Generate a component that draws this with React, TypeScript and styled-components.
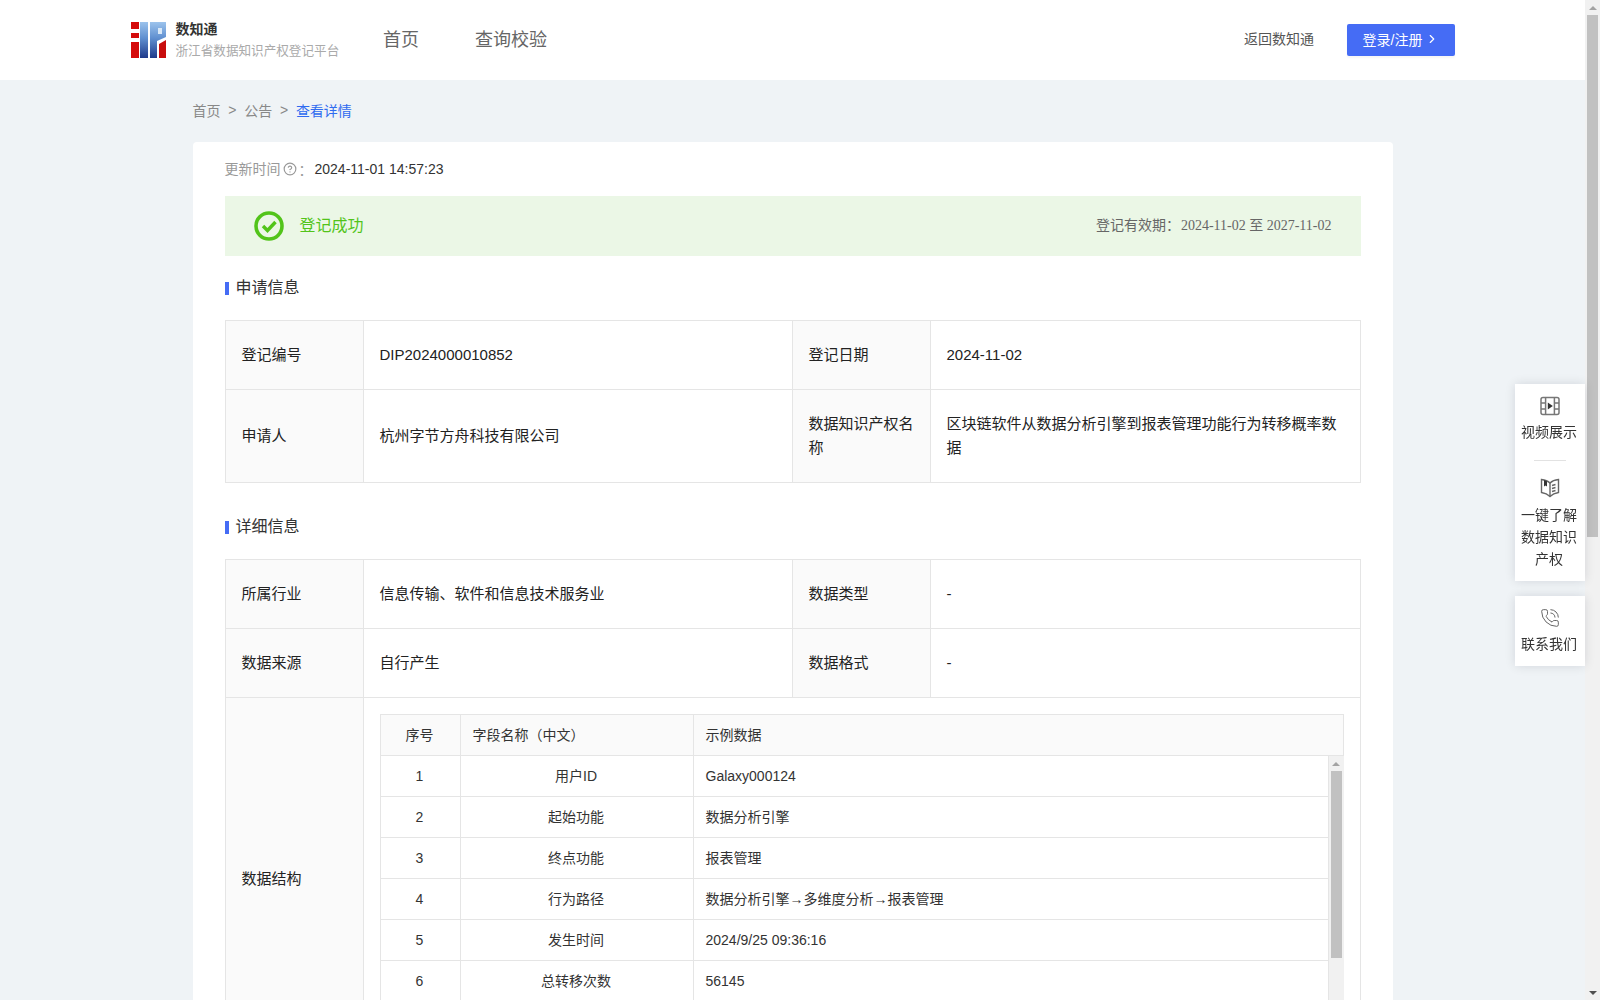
import React from "react";
import styled, {createGlobalStyle} from "styled-components";
import {ChevronRight, CircleHelp, PhoneCall} from "lucide-react";

//=============== STYLED ==================
const GlobalStyle = createGlobalStyle`
  html, body {
    margin: 0;
    height: 100%;
    overflow: hidden;
  }
  body {
    font-family: "Liberation Sans", "Noto Sans CJK SC", sans-serif;
    font-size: 14px;
    color: #333;
  }
`;

const Frame = styled.div`
  display: flex;
  height: 100vh;
  overflow: hidden;
`;
const Main = styled.div`
  flex: 1;
  min-width: 0;
  overflow: hidden;
  background-color: #eff3f6;
`;

const Header = styled.header`
  height: 80px;
  display: flex;
  align-items: center;
  padding: 0 130px 0 131px;
  background-color: #fff;
`;
const Brand = styled.div`
  width: 252px;
  display: flex;
  align-items: center;
  gap: 9.5px;
`;
const BrandName = styled.div`
  font-size: 14px;
  font-weight: bold;
  line-height: 20px;
  color: #333;
`;
const BrandSub = styled.div`
  font-size: 12.6px;
  line-height: 20px;
  padding-top: 2px;
  color: #aaa;
`;
const Nav = styled.nav`
  display: flex;
  gap: 56px;
  padding-bottom: 4px;
  font-size: 18px;
  color: #666;
`;
const HeaderRight = styled.div`
  margin-left: auto;
  display: flex;
  align-items: center;
  gap: 33px;
  color: #555;
`;
const BackLink = styled.span`
  padding-bottom: 4px;
`;
const LoginButton = styled.button`
  width: 108px;
  height: 32px;
  display: flex;
  align-items: center;
  justify-content: center;
  gap: 3px;
  padding: 0 0 3px;
  border: 0;
  border-radius: 2px;
  background-color: #456cf5;
  box-shadow: 0 2px 2px rgba(0, 0, 0, 0.04);
  color: #fff;
  font: inherit;
`;

const Content = styled.div`
  width: 1200px;
  margin: 0 auto;
`;
const Breadcrumb = styled.div`
  height: 62px;
  display: flex;
  align-items: center;
  padding-bottom: 3px;
  box-sizing: border-box;
  color: #888;
`;
const Crumb = styled.span<{ $active?: boolean }>`
  color: ${p => (p.$active ? "#2f6bf0" : "#888")};
`;
const CrumbSep = styled.span`
  margin: 0 7.75px;
`;
const Card = styled.div`
  padding: 0 32px;
  background-color: #fff;
  border-radius: 4px 4px 0 0;
`;
const UpdateRow = styled.div`
  height: 54px;
  display: flex;
  align-items: center;
  color: #999;
`;
const UpdateLabel = styled.span`
  padding-bottom: 2px;
`;
const HelpMark = styled.span`
  display: flex;
  margin-left: 2px;
`;
const Colon = styled.span`
  margin: 0 2px;
`;
const UpdateValue = styled.span`
  color: #333;
`;

const StatusBar = styled.div`
  height: 60px;
  display: flex;
  align-items: center;
  padding: 0 29px;
  background-color: #ebf7e6;
`;
const StatusText = styled.span`
  margin-left: 16px;
  padding-bottom: 4px;
  font-size: 16px;
  color: #52c41a;
`;
const Validity = styled.span`
  margin-left: auto;
  padding-bottom: 4px;
  color: #666;
`;
const ValidityDates = styled.span`
  margin-left: 1px;
  font-family: "Liberation Serif", "Noto Sans CJK SC", serif;
`;

const SectionTitle = styled.div<{ $spaced?: boolean }>`
  height: 64px;
  margin-top: ${p => (p.$spaced ? "12px" : "0")};
  display: flex;
  align-items: center;
  gap: 7px;
  font-size: 16px;
  color: #333;
  &::before {
    content: "";
    width: 4px;
    height: 13px;
    background-color: #456cf5;
  }
`;
const SectionText = styled.span`
  padding-bottom: 4px;
`;

const InfoGrid = styled.div`
  display: grid;
  grid-template-columns: 138px 429px 138px 1fr;
  border-top: 1px solid #e5e5e5;
  border-left: 1px solid #e5e5e5;
  font-size: 15px;
  line-height: 24px;
  color: #222;
`;
const Label = styled.div<{ $height?: number }>`
  min-height: ${p => p.$height || 69}px;
  display: flex;
  align-items: center;
  padding: 0 14px 0 16px;
  box-sizing: border-box;
  background-color: #fafafa;
  border-right: 1px solid #e5e5e5;
  border-bottom: 1px solid #e5e5e5;
`;
const Value = styled.div<{ $wide?: boolean }>`
  display: flex;
  align-items: center;
  padding: ${p => (p.$wide ? "16px" : "0 14px 0 16px")};
  box-sizing: border-box;
  min-width: 0;
  border-right: 1px solid #e5e5e5;
  border-bottom: 1px solid #e5e5e5;
  grid-column: ${p => (p.$wide ? "span 3" : "auto")};
`;

const FieldTable = styled.div`
  width: 100%;
  border: 1px solid #e5e5e5;
  border-bottom: 0;
  box-sizing: border-box;
  font-size: 14px;
  line-height: 20px;
  color: #333;
`;
const FieldRow = styled.div<{ $head?: boolean }>`
  height: 41px;
  display: grid;
  grid-template-columns: 80px 233px 1fr;
  box-sizing: border-box;
  border-bottom: 1px solid #e5e5e5;
  background-color: ${p => (p.$head ? "#fafafa" : "#fff")};
`;
const FieldCell = styled.div<{ $center?: boolean; $last?: boolean }>`
  display: flex;
  align-items: center;
  justify-content: ${p => (p.$center ? "center" : "flex-start")};
  padding: ${p => (p.$center ? "0 12px 0 11px" : "0 11px 0 12px")};
  border-right: ${p => (p.$last ? "0" : "1px solid #e5e5e5")};
`;
const FieldBody = styled.div`
  height: 287px;
  display: flex;
  margin-right: -1px;
  overflow: hidden;
`;
const FieldRows = styled.div`
  flex: 1;
  min-width: 0;
  border-right: 1px solid #e5e5e5;
`;

const Track = styled.div`
  width: 15px;
  flex: none;
  display: flex;
  flex-direction: column;
  align-items: center;
  background-color: #f1f1f1;
`;
const ArrowBox = styled.div<{ $down?: boolean }>`
  height: 15px;
  flex: none;
  display: flex;
  align-items: center;
  margin-top: ${p => (p.$down ? "auto" : "0")};
  &::before {
    content: "";
    border-left: 4px solid transparent;
    border-right: 4px solid transparent;
    ${p => (p.$down ? "border-top: 4px solid #505050;" : "border-bottom: 4px solid #a3a3a3;")}
  }
`;
const Thumb = styled.div<{ $height: number }>`
  width: 11px;
  height: ${p => p.$height}px;
  flex: none;
  background-color: #c1c1c1;
`;

const FloatBar = styled.aside`
  position: fixed;
  top: 384px;
  right: 15px;
  width: 70px;
  display: flex;
  flex-direction: column;
  gap: 15px;
`;
const FloatPanel = styled.div`
  background-color: #fff;
  box-shadow: 0 0 10px rgba(0, 0, 40, 0.12);
`;
const FloatItem = styled.div<{ $gap?: number }>`
  display: flex;
  flex-direction: column;
  align-items: center;
  padding: 12px 7px 11px;
  gap: ${p => p.$gap || 5}px;
  text-align: center;
  line-height: 22px;
  color: #333;
`;
const FloatText = styled.span`
  margin: 0 1px 0 -1px;
`;
const FloatDivider = styled.div`
  width: 32px;
  height: 1px;
  margin: 6px auto 5px;
  background-color: #e2e2e2;
`;

//============== DATA =====================
const fields = [
    {no: 1, name: "用户ID", sample: "Galaxy000124"},
    {no: 2, name: "起始功能", sample: "数据分析引擎"},
    {no: 3, name: "终点功能", sample: "报表管理"},
    {no: 4, name: "行为路径", sample: "数据分析引擎→多维度分析→报表管理"},
    {no: 5, name: "发生时间", sample: "2024/9/25 09:36:16"},
    {no: 6, name: "总转移次数", sample: "56145"},
];

//============== ICONS =====================
const Logo = () => (
    <svg width="35" height="36" viewBox="0 0 35 36">
        <defs>
            <linearGradient id="logoBlue" x1="0" y1="0" x2="0" y2="1">
                <stop offset="0" stopColor="#9cc3ec"/>
                <stop offset="0.45" stopColor="#5f8fd0"/>
                <stop offset="1" stopColor="#1f3a8a"/>
            </linearGradient>
        </defs>
        <rect x="0" y="0" width="8" height="7" fill="#d50b0b"/>
        <rect x="0" y="11" width="8" height="5" fill="#d50b0b"/>
        <rect x="0" y="20" width="8" height="16" fill="#d50b0b"/>
        <rect x="9" y="0" width="8" height="36" fill="url(#logoBlue)"/>
        <path d="M19 0H35V15L26 19V36H19Z" fill="url(#logoBlue)"/>
        <rect x="27" y="6" width="4" height="6" fill="#d8e8f8"/>
        <path d="M28 22L35 18V36H28Z" fill="#c80d0d"/>
    </svg>
);

const CheckBadge = () => (
    <svg width="30" height="30" viewBox="0 0 30 30" fill="none">
        <circle cx="15" cy="15" r="13" stroke="#52c41a" strokeWidth="3.6"/>
        <path d="M9 15l4.5 4.5L21.5 11" stroke="#52c41a" strokeWidth="3.4"/>
    </svg>
);

const FilmIcon = () => (
    <svg width="20" height="20" viewBox="0 0 20 20" fill="none" stroke="#777" strokeWidth="1.5">
        <rect x="1" y="1.500" width="18" height="17" rx="2"/>
        <path d="M5.600 1.500v17M14.400 1.500v17M1 7h4.600M1 13h4.600M14.400 7H19M14.400 13H19"/>
        <path d="M7.800 6.500l5 3.500l-5 3.500Z" fill="#333" stroke="none"/>
    </svg>
);

const BookIcon = () => (
    <svg width="20" height="20" viewBox="0 0 20 20" fill="none" stroke="#666" strokeWidth="1.4">
        <path d="M10 5C8 3 5 1.800 1.500 1.500V14.500C5 15 8 16.500 10 18.500C12 16.500 15 15 18.500 14.500V1.500C15 1.800 12 3 10 5Z"/>
        <path d="M10 5V18.500"/>
        <path d="M4 2V8.500L5.500 7.500L7 8.500V3.200Z" fill="#333" stroke="none"/>
        <path d="M12 7.500L15.500 6.500M12 10.500L15.500 9.500M12 13.500L15.500 12.500"/>
    </svg>
);

//============== COMPONENT =====================
const App: React.FC = () => {
    return (
        <Frame>
            <GlobalStyle/>
            <Main>
                <Header>
                    <Brand>
                        <Logo/>
                        <div>
                            <BrandName>数知通</BrandName>
                            <BrandSub>浙江省数据知识产权登记平台</BrandSub>
                        </div>
                    </Brand>
                    <Nav>
                        <span>首页</span>
                        <span>查询校验</span>
                    </Nav>
                    <HeaderRight>
                        <BackLink>返回数知通</BackLink>
                        <LoginButton>
                            登录/注册
                            <ChevronRight size={14}/>
                        </LoginButton>
                    </HeaderRight>
                </Header>

                <Content>
                    <Breadcrumb>
                        <Crumb>首页</Crumb>
                        <CrumbSep>&gt;</CrumbSep>
                        <Crumb>公告</Crumb>
                        <CrumbSep>&gt;</CrumbSep>
                        <Crumb $active>查看详情</Crumb>
                    </Breadcrumb>

                    <Card>
                        <UpdateRow>
                            <UpdateLabel>更新时间</UpdateLabel>
                            <HelpMark><CircleHelp size={14} color="#999"/></HelpMark>
                            <Colon>：</Colon>
                            <UpdateValue>2024-11-01 14:57:23</UpdateValue>
                        </UpdateRow>

                        <StatusBar>
                            <CheckBadge/>
                            <StatusText>登记成功</StatusText>
                            <Validity>
                                登记有效期：<ValidityDates>2024-11-02 至 2027-11-02</ValidityDates>
                            </Validity>
                        </StatusBar>

                        <SectionTitle><SectionText>申请信息</SectionText></SectionTitle>
                        <InfoGrid>
                            <Label>登记编号</Label>
                            <Value>DIP2024000010852</Value>
                            <Label>登记日期</Label>
                            <Value>2024-11-02</Value>
                            <Label $height={93}>申请人</Label>
                            <Value>杭州字节方舟科技有限公司</Value>
                            <Label $height={93}>数据知识产权名称</Label>
                            <Value>区块链软件从数据分析引擎到报表管理功能行为转移概率数据</Value>
                        </InfoGrid>

                        <SectionTitle $spaced><SectionText>详细信息</SectionText></SectionTitle>
                        <InfoGrid>
                            <Label>所属行业</Label>
                            <Value>信息传输、软件和信息技术服务业</Value>
                            <Label>数据类型</Label>
                            <Value>-</Value>
                            <Label>数据来源</Label>
                            <Value>自行产生</Value>
                            <Label>数据格式</Label>
                            <Value>-</Value>
                            <Label $height={360}>数据结构</Label>
                            <Value $wide>
                                <FieldTable>
                                    <FieldRow $head>
                                        <FieldCell $center>序号</FieldCell>
                                        <FieldCell>字段名称（中文）</FieldCell>
                                        <FieldCell $last>示例数据</FieldCell>
                                    </FieldRow>
                                    <FieldBody>
                                        <FieldRows>
                                            {fields.map(f => (
                                                <FieldRow key={f.no}>
                                                    <FieldCell $center>{f.no}</FieldCell>
                                                    <FieldCell $center>{f.name}</FieldCell>
                                                    <FieldCell $last>{f.sample}</FieldCell>
                                                </FieldRow>
                                            ))}
                                        </FieldRows>
                                        <Track>
                                            <ArrowBox/>
                                            <Thumb $height={187}/>
                                        </Track>
                                    </FieldBody>
                                </FieldTable>
                            </Value>
                        </InfoGrid>
                    </Card>
                </Content>
            </Main>

            <Track>
                <ArrowBox/>
                <Thumb $height={522}/>
                <ArrowBox $down/>
            </Track>

            <FloatBar>
                <FloatPanel>
                    <FloatItem>
                        <FilmIcon/>
                        <FloatText>视频展示</FloatText>
                    </FloatItem>
                    <FloatDivider/>
                    <FloatItem $gap={6}>
                        <BookIcon/>
                        <FloatText>一键了解数据知识产权</FloatText>
                    </FloatItem>
                </FloatPanel>
                <FloatPanel>
                    <FloatItem>
                        <PhoneCall size={20} color="#666" strokeWidth={1.2}/>
                        <FloatText>联系我们</FloatText>
                    </FloatItem>
                </FloatPanel>
            </FloatBar>
        </Frame>
    )
};
export default App;
